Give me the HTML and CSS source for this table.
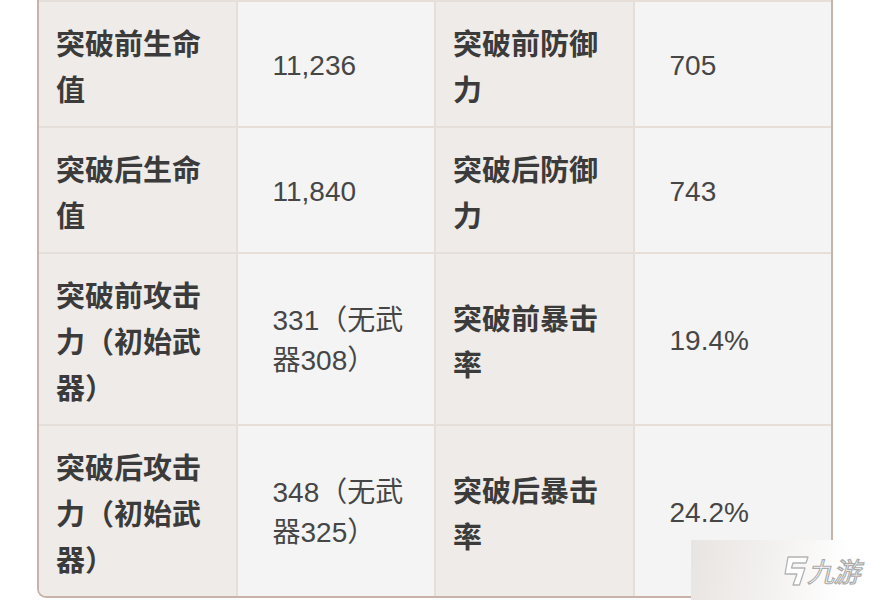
FILE: index.html
```html
<!DOCTYPE html>
<html lang="zh-CN">
<head>
<meta charset="utf-8">
<title>突破属性</title>
<link rel="stylesheet" href="styles.css">
</head>
<body>
<div class="table-wrap">
  <div class="grid">
    <div class="cell label">突破前生命值</div>
    <div class="cell value">11,236</div>
    <div class="cell label">突破前防御力</div>
    <div class="cell value">705</div>

    <div class="cell label">突破后生命值</div>
    <div class="cell value">11,840</div>
    <div class="cell label">突破后防御力</div>
    <div class="cell value">743</div>

    <div class="cell label">突破前攻击力（初始武器）</div>
    <div class="cell value">331（无武器308）</div>
    <div class="cell label">突破前暴击率</div>
    <div class="cell value">19.4%</div>

    <div class="cell label">突破后攻击力（初始武器）</div>
    <div class="cell value">348（无武器325）</div>
    <div class="cell label">突破后暴击率</div>
    <div class="cell value">24.2%</div>
  </div>
</div>
<div class="watermark">
  <svg class="wm-logo" width="28" height="30" viewBox="0 0 28 30">
    <path d="M7 1 L27 1 L25 7 L12 7 L10.5 12 L24 12 L18.5 29 L12 29 L16 18 L4 18 Z" fill="#ffffff" stroke="#b3b3b3" stroke-width="1.3" stroke-linejoin="round"/>
  </svg>
  <span class="wm-text">九游</span>
</div>
</body>
</html>
```
FILE: styles.css
```css
html, body {
  margin: 0;
  padding: 0;
  background: #ffffff;
}
body {
  position: relative;
  width: 871px;
  height: 600px;
  overflow: hidden;
  font-family: "Liberation Sans", "Noto Sans CJK SC", sans-serif;
}
.table-wrap {
  margin-left: 37px;
  width: 796px;
  box-sizing: border-box;
  border-left: 2px solid #c9b3a9;
  border-right: 2px solid #c9b3a9;
  border-bottom: 2px solid #c9b3a9;
  border-radius: 0 0 9px 9px;
  overflow: hidden;
  background: #e6dfd9;
}
.grid {
  display: grid;
  grid-template-columns: repeat(4, 1fr);
  gap: 2px;
  padding-top: 2px;
}
.cell {
  display: flex;
  align-items: center;
  box-sizing: border-box;
  padding: 17px 17px 15px 17px;
}
.label {
  background: #efebe8;
  color: #3b3b3b;
  font-family: "Noto Sans CJK SC", sans-serif;
  font-weight: 700;
  font-size: 29px;
  line-height: 46px;
}
.value {
  background: #f4f4f4;
  color: #464646;
  font-size: 28px;
  line-height: 40px;
  padding-left: 35px;
  padding-top: 18px;
  padding-bottom: 14px;
}
.watermark {
  position: absolute;
  left: 691px;
  top: 540px;
  width: 180px;
  height: 60px;
  background: linear-gradient(100deg, #e8e4e1 0%, #f3f1f0 45%, #ffffff 85%);
  display: flex;
  align-items: center;
  padding-left: 90px;
  padding-top: 2px;
  box-sizing: border-box;
  gap: 1px;
}
.wm-logo {
  flex: none;
}
.wm-text {
  font-family: "Noto Sans CJK SC", sans-serif;
  font-size: 27px;
  font-weight: 400;
  color: #ffffff;
  -webkit-text-stroke: 1.2px #ababab;
  transform: skewX(-14deg);
  letter-spacing: -1px;
  line-height: 30px;
  white-space: nowrap;
}
```
